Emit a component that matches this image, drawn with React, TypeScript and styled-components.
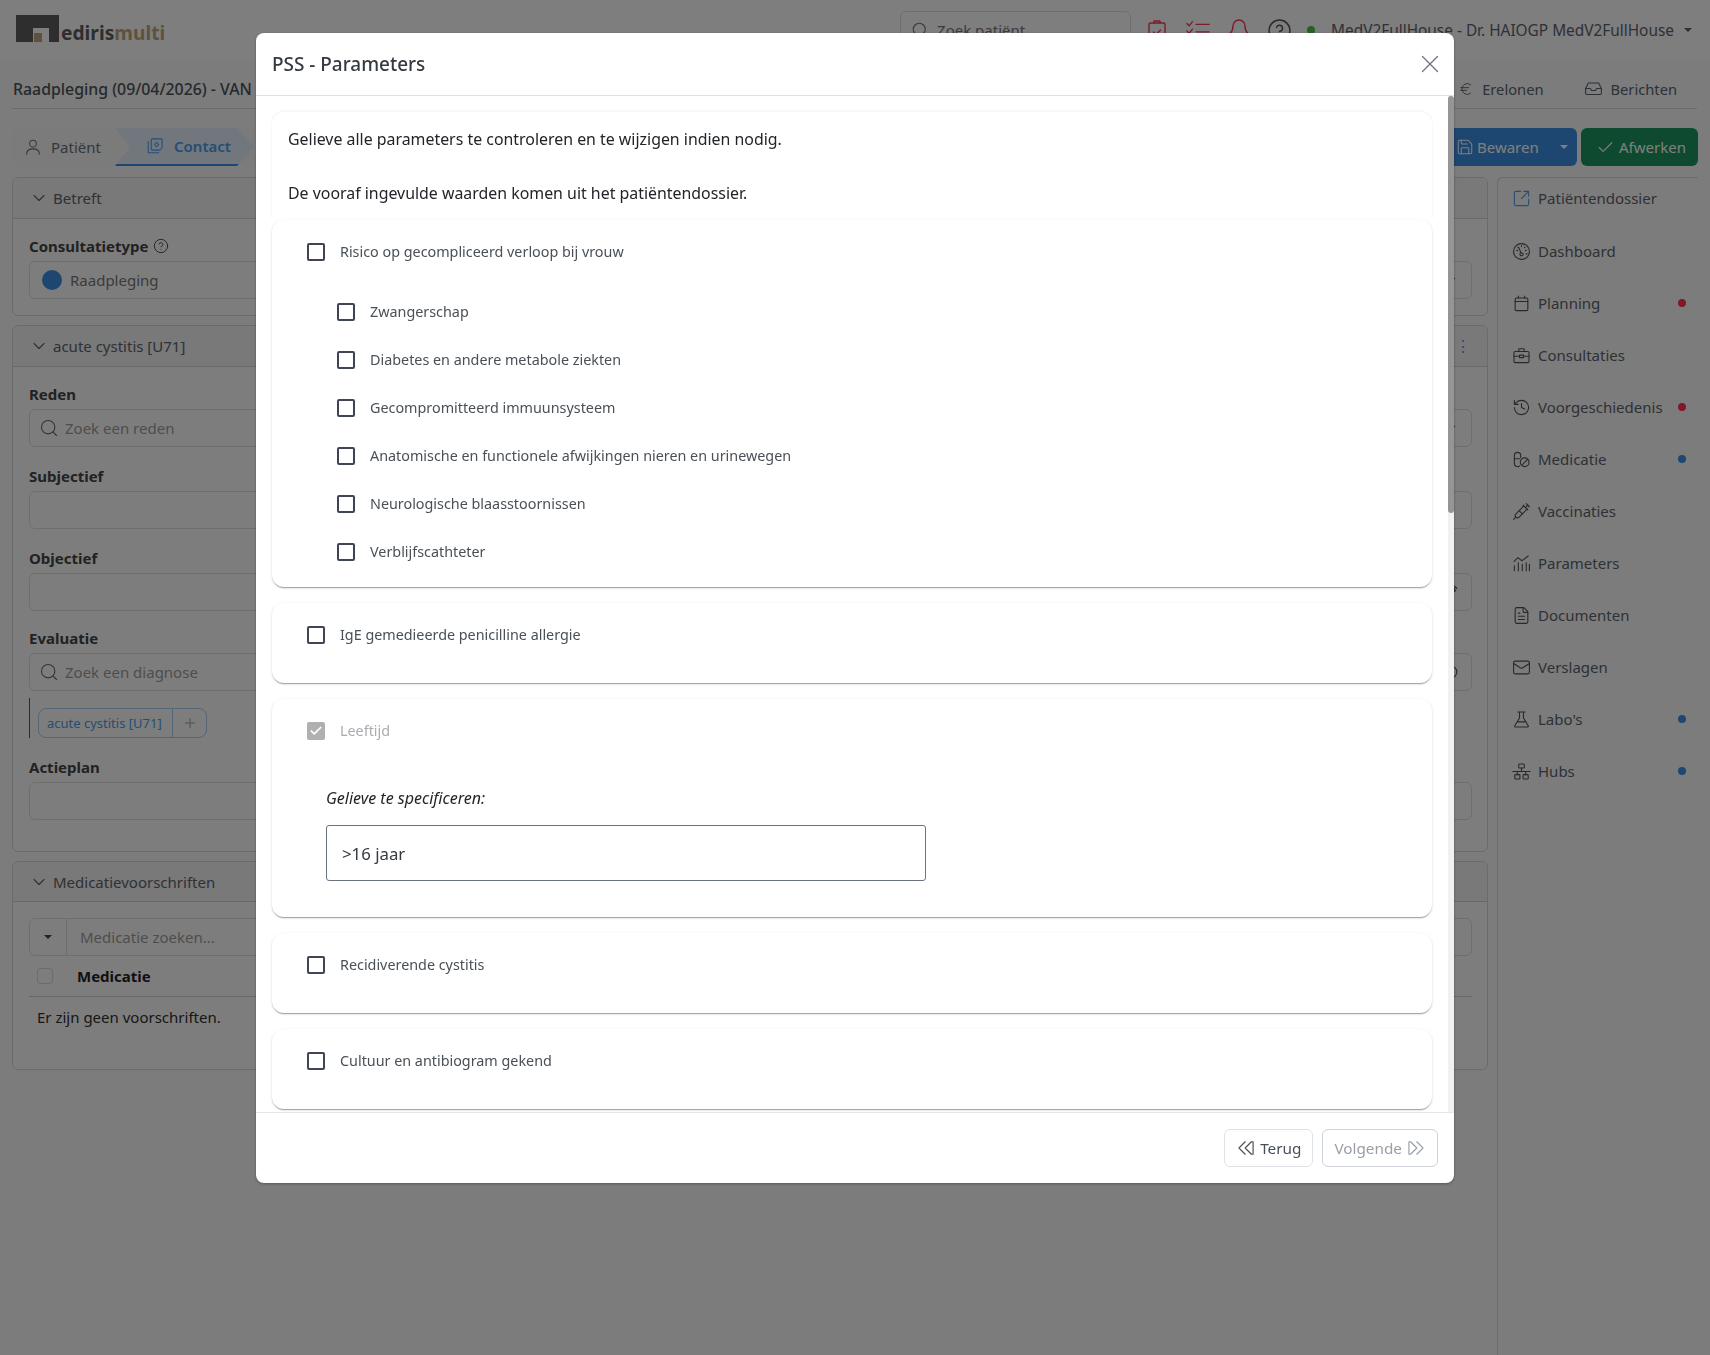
import React from "react";
import styled, { createGlobalStyle } from "styled-components";
import {
  Bell,
  Check,
  ChevronDown,
  CircleHelp,
  Euro,
  FileText,
  History,
  Mail,
  Plus,
  Save,
  Search,
  SquareArrowOutUpRight,
  Syringe,
  X,
} from "lucide-react";

const GlobalStyle = createGlobalStyle`
  html, body {
    margin: 0;
    padding: 0;
    background: #f9f9f9;
    font-family: "Noto Sans", "Open Sans", sans-serif;
    color: #5c636a;
  }
  * { box-sizing: border-box; }
`;

/* ---------- drawn icons ---------- */

const Drawn = styled.svg<{ $size?: number }>`
  width: ${(p) => p.$size ?? 19}px;
  height: ${(p) => p.$size ?? 19}px;
  flex: none;
  fill: none;
  stroke: currentColor;
  stroke-width: 1.4;
  stroke-linecap: round;
  stroke-linejoin: round;
`;

const IconGauge = () => (
  <Drawn viewBox="0 0 24 24">
    <circle cx="12" cy="12" r="10" />
    <circle cx="12" cy="15.5" r="2" />
    <path d="M11.3 13.6 8.5 7M6 10.5l1 .4M7.5 6.5l.7.7M12 4.5v1.2M16.5 6.5l-.7.7M18 10.5l-1 .4M19 15h-1.2" />
  </Drawn>
);
const IconCalendar = () => (
  <Drawn viewBox="0 0 24 24">
    <rect x="4" y="5" width="16" height="16" rx="1.5" />
    <path d="M4 9.5h16M8 2.5V5M16 2.5V5" />
  </Drawn>
);
const IconBriefcase = () => (
  <Drawn viewBox="0 0 24 24">
    <rect x="2.5" y="7" width="19" height="14" rx="1.5" />
    <path d="M8.5 7V4.5a1 1 0 0 1 1-1h5a1 1 0 0 1 1 1V7M2.5 13h7M14.5 13h7" />
    <rect x="9.5" y="11.5" width="5" height="3.2" />
  </Drawn>
);
const IconMedication = () => (
  <Drawn viewBox="0 0 24 24">
    <path d="M3 10V7a4 4 0 0 1 8 0v2.5M3 10v7a4 4 0 0 0 6.5 3.2M3 11h7" />
    <circle cx="16" cy="15.5" r="5.5" />
    <path d="m12.5 19 7-7" />
  </Drawn>
);
const IconBars = () => (
  <Drawn viewBox="0 0 24 24">
    <path d="M3 21v-6M8 21V11M13 21v-8M18 21V11M22 21v-8" />
    <path d="m2.5 9.5 5-5 5 4 8-6" />
  </Drawn>
);
const IconFlask = () => (
  <Drawn viewBox="0 0 24 24">
    <path d="M7.5 2.5h9M9.5 2.5V10L3.5 20a1 1 0 0 0 .9 1.5h15.2a1 1 0 0 0 .9-1.5l-6-10V2.5M6.5 15h11" />
  </Drawn>
);
const IconHubs = () => (
  <Drawn viewBox="0 0 24 24">
    <rect x="8.5" y="2.5" width="7" height="5" rx="1" />
    <rect x="3.5" y="16" width="6.5" height="5.5" rx="1" />
    <rect x="14" y="16" width="6.5" height="5.5" rx="1" />
    <path d="M12 7.5V12M1 12h22M6.7 12v4M17.3 12v4" />
  </Drawn>
);
const IconPerson = () => (
  <Drawn viewBox="0 0 24 24" $size={18}>
    <circle cx="12" cy="7.5" r="4.5" />
    <path d="M3.5 21.5c0-4.5 3.5-7 8.5-7s8.5 2.5 8.5 7" />
  </Drawn>
);
const IconContact = () => (
  <Drawn viewBox="0 0 24 24" $size={18}>
    <path d="M3 6v15h14" />
    <path d="M8.5 2.5H20a1.5 1.5 0 0 1 1.5 1.5v8.5a5 5 0 0 1-5 5H8.5A1.5 1.5 0 0 1 7 16V4a1.5 1.5 0 0 1 1.5-1.5z" />
    <path d="m14.2 7 2.8 3-2.8 3-2.8-3z" />
  </Drawn>
);
const IconInbox = () => (
  <Drawn viewBox="0 0 24 24" $size={19}>
    <path d="M5.5 5h13L22 12v6a1.5 1.5 0 0 1-1.5 1.5h-17A1.5 1.5 0 0 1 2 18v-6zM2 12h6l1.5 2.5h5L16 12h6" />
  </Drawn>
);
const IconClipboard = () => (
  <Drawn viewBox="0 0 24 24" $size={24}>
    <rect x="4" y="5" width="16" height="17" rx="1.5" />
    <path d="M9 5V3h6v2M8.5 14l2.5 2.5 4.5-4.5" />
  </Drawn>
);
const IconTodo = () => (
  <Drawn viewBox="0 0 28 24" $size={26}>
    <path d="m2 5 2.5 2.5L8 3M2 13l2.5 2.5L8 11M2 21l2.5 2.5L8 19M12 6h14M12 14h14M12 22h14" />
  </Drawn>
);
const IconBack = () => (
  <Drawn viewBox="0 0 24 24" $size={20}>
    <path d="M11 4.5 3.5 12l7.5 7.5M18.5 4.5 11 12l7.5 7.5M20.5 4.5v15M18.5 4.5h2M18.5 19.5h2" />
  </Drawn>
);
const IconNext = () => (
  <Drawn viewBox="0 0 24 24" $size={20}>
    <path d="M13 4.5 20.5 12 13 19.5M5.5 4.5 13 12l-7.5 7.5M3.5 4.5v15M3.5 4.5h2M3.5 19.5h2" />
  </Drawn>
);
const LogoMark = () => (
  <svg width="43" height="27" viewBox="0 0 43 27" style={{ flex: "none" }}>
    <path d="M0 0h43v27H33V13H17v14H0z" fill="#5c5c5c" />
    <rect x="18" y="18" width="8" height="9" fill="#bda57a" />
  </svg>
);

/* ---------- data ---------- */

const sideItems = [
  { label: "Patiëntendossier", icon: <SquareArrowOutUpRight size={19} strokeWidth={1.4} />, accent: true },
  { label: "Dashboard", icon: <IconGauge /> },
  { label: "Planning", icon: <IconCalendar />, dot: "#ff3050" },
  { label: "Consultaties", icon: <IconBriefcase /> },
  { label: "Voorgeschiedenis", icon: <History size={19} strokeWidth={1.4} />, dot: "#ff3050" },
  { label: "Medicatie", icon: <IconMedication />, dot: "#3a8ee0" },
  { label: "Vaccinaties", icon: <Syringe size={19} strokeWidth={1.4} /> },
  { label: "Parameters", icon: <IconBars /> },
  { label: "Documenten", icon: <FileText size={19} strokeWidth={1.4} /> },
  { label: "Verslagen", icon: <Mail size={19} strokeWidth={1.4} /> },
  { label: "Labo's", icon: <IconFlask />, dot: "#3a8ee0" },
  { label: "Hubs", icon: <IconHubs />, dot: "#3a8ee0" },
];

const riskItems = [
  "Zwangerschap",
  "Diabetes en andere metabole ziekten",
  "Gecompromitteerd immuunsysteem",
  "Anatomische en functionele afwijkingen nieren en urinewegen",
  "Neurologische blaasstoornissen",
  "Verblijfscathteter",
];

/* ---------- app ---------- */

const CheckRow: React.FC<{ label: string; checked?: boolean }> = ({ label, checked }) => (
  <Row>
    <CheckBox $checked={checked}>{checked && <Check size={14} strokeWidth={3} color="#fff" />}</CheckBox>
    <RowLabel $muted={checked}>{label}</RowLabel>
  </Row>
);

const App: React.FC = () => (
  <>
    <GlobalStyle />
    <Page>
      <TopBar>
        <Logo>
          <LogoMark />
          <LogoText>
            ediris<LogoAccent>multi</LogoAccent>
          </LogoText>
        </Logo>
        <TopSearch>
          <Search size={18} strokeWidth={1.5} />
          <span>Zoek patiënt</span>
        </TopSearch>
        <TopIcons>
          <RedIcon>
            <IconClipboard />
          </RedIcon>
          <RedIcon>
            <IconTodo />
          </RedIcon>
          <RedIcon>
            <Bell size={24} strokeWidth={1.4} />
          </RedIcon>
          <CircleHelp size={25} strokeWidth={1.4} color="#555" />
        </TopIcons>
        <OnlineDot />
        <UserName>MedV2FullHouse - Dr. HAIOGP MedV2FullHouse</UserName>
        <Caret />
      </TopBar>

      <TitleRow>
        <PageTitle>Raadpleging (09/04/2026) - VAN</PageTitle>
        <TitleLinks>
          <TitleLink>
            <Euro size={16} strokeWidth={1.4} />
            Erelonen
          </TitleLink>
          <TitleLink>
            <IconInbox />
            Berichten
          </TitleLink>
        </TitleLinks>
      </TitleRow>

      <ActionRow>
        <Steps>
          <StepFirst>
            <IconPerson />
            Patiënt
          </StepFirst>
          <StepActive>
            <IconContact />
            Contact
          </StepActive>
        </Steps>
        <Actions>
          <SaveButton>
            <Save size={18} strokeWidth={1.4} />
            Bewaren
            <CaretLight />
          </SaveButton>
          <FinishButton>
            <Check size={19} strokeWidth={1.4} />
            Afwerken
          </FinishButton>
        </Actions>
      </ActionRow>

      <Content>
        <Panels>
          <Panel>
            <PanelHeader>
              <ChevronDown size={20} strokeWidth={1.3} />
              Betreft
            </PanelHeader>
            <PanelBody>
              <Field>
                <FieldLabel>
                  Consultatietype <CircleHelp size={16} strokeWidth={1.4} />
                </FieldLabel>
                <FieldInput>
                  <TypeDot />
                  <TypeText>Raadpleging</TypeText>
                  <InputTail>
                    <ChevronDown size={14} />
                  </InputTail>
                </FieldInput>
              </Field>
            </PanelBody>
          </Panel>

          <Panel>
            <PanelHeader>
              <ChevronDown size={20} strokeWidth={1.3} />
              acute cystitis [U71]
              <Kebab>⋮</Kebab>
            </PanelHeader>
            <PanelBody $bottom={31}>
              <Field>
                <FieldLabel>Reden</FieldLabel>
                <FieldInput>
                  <Search size={20} strokeWidth={1.3} />
                  <Placeholder>Zoek een reden</Placeholder>
                  <InputTail>
                    <ChevronDown size={14} />
                  </InputTail>
                </FieldInput>
              </Field>
              <Field>
                <FieldLabel>Subjectief</FieldLabel>
                <FieldInput />
              </Field>
              <Field>
                <FieldLabel>Objectief</FieldLabel>
                <FieldInput>
                  <InputTail>
                    <Syringe size={14} />
                  </InputTail>
                </FieldInput>
              </Field>
              <EvaluationField>
                <FieldLabel>Evaluatie</FieldLabel>
                <FieldInput>
                  <Search size={20} strokeWidth={1.3} />
                  <Placeholder>Zoek een diagnose</Placeholder>
                  <InputTail>
                    <CircleHelp size={14} />
                  </InputTail>
                </FieldInput>
                <ChipRow>
                  <Chip>
                    <ChipText>acute cystitis [U71]</ChipText>
                    <ChipAdd>
                      <Plus size={16} strokeWidth={1.4} />
                    </ChipAdd>
                  </Chip>
                </ChipRow>
              </EvaluationField>
              <Field>
                <FieldLabel>Actieplan</FieldLabel>
                <FieldInput />
              </Field>
            </PanelBody>
          </Panel>

          <Panel>
            <MedHeader>
              <ChevronDown size={20} strokeWidth={1.3} />
              Medicatievoorschriften
            </MedHeader>
            <MedBody>
              <MedSearch>
                <MedToggle>
                  <CaretSmall />
                </MedToggle>
                <Placeholder>Medicatie zoeken...</Placeholder>
              </MedSearch>
              <MedHead>
                <MedCheck />
                Medicatie
              </MedHead>
              <MedEmpty>Er zijn geen voorschriften.</MedEmpty>
            </MedBody>
          </Panel>
        </Panels>

        <Sidebar>
          {sideItems.map((item) => (
            <SideItem key={item.label}>
              <SideIcon $accent={item.accent}>{item.icon}</SideIcon>
              {item.label}
              {item.dot && <SideDot $color={item.dot} />}
            </SideItem>
          ))}
        </Sidebar>
      </Content>
    </Page>

    <Backdrop>
      <Modal>
        <ModalHeader>
          <ModalTitle>PSS - Parameters</ModalTitle>
          <CloseButton>
            <X size={30} strokeWidth={1} />
          </CloseButton>
        </ModalHeader>
        <ModalScroll>
          <ModalBody>
            <IntroCard>
              <p>Gelieve alle parameters te controleren en te wijzigen indien nodig.</p>
              <p>De vooraf ingevulde waarden komen uit het patiëntendossier.</p>
            </IntroCard>
            <CardList>
              <Card>
                <CheckRow label="Risico op gecompliceerd verloop bij vrouw" />
                <SubList>
                  {riskItems.map((item) => (
                    <CheckRow key={item} label={item} />
                  ))}
                </SubList>
              </Card>
              <Card $short>
                <CheckRow label="IgE gemedieerde penicilline allergie" />
              </Card>
              <Card>
                <CheckRow label="Leeftijd" checked />
                <Specify>
                  <SpecifyLabel>Gelieve te specificeren:</SpecifyLabel>
                  <SpecifyInput readOnly value=">16 jaar" />
                </Specify>
              </Card>
              <Card $short>
                <CheckRow label="Recidiverende cystitis" />
              </Card>
              <Card $short>
                <CheckRow label="Cultuur en antibiogram gekend" />
              </Card>
            </CardList>
          </ModalBody>
          <ScrollTrack>
            <ScrollThumb />
          </ScrollTrack>
        </ModalScroll>
        <ModalFooter>
          <FooterButton>
            <IconBack />
            Terug
          </FooterButton>
          <FooterButton disabled>
            Volgende
            <IconNext />
          </FooterButton>
        </ModalFooter>
      </Modal>
    </Backdrop>
  </>
);

/* ---------- page behind the dialog ---------- */

const Page = styled.div`
  min-height: 1355px;
  display: flex;
  flex-direction: column;
`;

const TopBar = styled.header`
  height: 60px;
  flex: none;
  display: flex;
  align-items: center;
  background: #fcfcfc;
  padding: 0 4px 0 16px;
`;

const Logo = styled.div`
  display: flex;
  align-items: flex-end;
  gap: 2px;
  margin-top: -3px;
  height: 27px;
`;

const LogoText = styled.span`
  margin-bottom: -1px;
  font-size: 19.2px;
  line-height: 20px;
  font-weight: 700;
  color: #5c5c5c;
`;

const LogoAccent = styled.span`
  color: #bda57a;
`;

const TopSearch = styled.div`
  margin-left: auto;
  width: 231px;
  height: 38px;
  display: flex;
  align-items: center;
  gap: 8px;
  padding: 0 10px;
  border: 1px solid #dcdcdc;
  border-radius: 6px;
  font-size: 15px;
  color: #777;
`;

const TopIcons = styled.div`
  display: flex;
  align-items: center;
  gap: 16px;
  margin-left: 14px;
`;

const RedIcon = styled.span`
  display: flex;
  color: #f43a55;
`;

const OnlineDot = styled.span`
  width: 8px;
  height: 8px;
  border-radius: 50%;
  background: #4cc04c;
  margin-left: 15px;
`;

const UserName = styled.span`
  margin-left: 16px;
  font-size: 15.4px;
  color: #5c636a;
  white-space: nowrap;
`;

const Caret = styled.span`
  margin-left: 10px;
  margin-right: 14px;
  border-left: 4px solid transparent;
  border-right: 4px solid transparent;
  border-top: 4px solid #5c636a;
`;

const TitleRow = styled.div`
  height: 49px;
  flex: none;
  margin: 0 13px 0 12px;
  padding: 9px 20px 0 1px;
  display: flex;
  align-items: center;
  justify-content: space-between;
  border-bottom: 1px solid #d6d6d6;
`;

const PageTitle = styled.h1`
  margin: 0;
  font-size: 15.85px;
  font-weight: 500;
  color: #4c5258;
`;

const TitleLinks = styled.div`
  display: flex;
  gap: 40px;
`;

const TitleLink = styled.span`
  display: flex;
  align-items: center;
  gap: 8px;
  font-size: 14.7px;
  color: #5c636a;
`;

const ActionRow = styled.div`
  margin: 19px 12px 11px;
  height: 38px;
  flex: none;
  display: flex;
  justify-content: space-between;
`;

const Steps = styled.div`
  display: flex;
  background: #f6f6f6;
  border-radius: 6px;
`;

const StepFirst = styled.div`
  width: 118px;
  display: flex;
  align-items: center;
  gap: 9px;
  padding-left: 12px;
  font-size: 15px;
  color: #6a7178;
  background: #f6f6f6;
  border-radius: 6px 0 0 6px;
  clip-path: polygon(0 0, 103px 0, 100% 50%, 103px 100%, 0 100%);
`;

const StepActive = styled.div`
  width: 140px;
  margin-left: -15px;
  display: flex;
  align-items: center;
  gap: 10px;
  padding-left: 31px;
  font-size: 15px;
  font-weight: 600;
  color: #4a9ce8;
  background: #e2eef8;
  border-bottom: 2px solid #3a8ee0;
  clip-path: polygon(0 0, 122px 0, 100% 50%, 122px 100%, 0 100%, 15px 50%);
`;

const Actions = styled.div`
  display: flex;
  gap: 4px;
`;

const ActionButton = styled.button`
  height: 38px;
  border: none;
  border-radius: 6px;
  display: flex;
  align-items: center;
  color: #fff;
  font-family: inherit;
  font-size: 15px;
`;

const SaveButton = styled(ActionButton)`
  width: 137px;
  gap: 3px;
  padding-left: 16px;
  background: #3a8ee0;
`;

const FinishButton = styled(ActionButton)`
  width: 117px;
  gap: 4px;
  padding-left: 15px;
  background: #1a945e;
`;

const CaretLight = styled.span`
  margin-left: 18px;
  border-left: 4px solid transparent;
  border-right: 4px solid transparent;
  border-top: 4px solid #fff;
`;

const Content = styled.div`
  flex: 1;
  display: flex;
  gap: 9px;
  padding: 0 12px;
`;

const Panels = styled.div`
  width: 1476px;
  flex: none;
  display: flex;
  flex-direction: column;
  gap: 9px;
`;

const Panel = styled.section`
  background: #fbfbfb;
  border: 1px solid #d6d6d6;
  border-radius: 6px;
  overflow: hidden;
`;

const PanelHeader = styled.div`
  height: 41px;
  display: flex;
  align-items: center;
  gap: 4px;
  padding-left: 16px;
  background: #f2f2f2;
  border-bottom: 1px solid #d2d2d2;
  font-size: 15px;
  color: #5c636a;
`;

const MedHeader = styled(PanelHeader)`
  height: 40px;
`;

const Kebab = styled.span`
  margin-left: auto;
  margin-right: 16px;
  font-size: 16px;
  color: #4a9ce8;
`;

const PanelBody = styled.div<{ $bottom?: number }>`
  display: flex;
  flex-direction: column;
  gap: 18px;
  padding: 16px 15px ${(p) => p.$bottom ?? 16}px 16px;
`;

const Field = styled.div`
  display: flex;
  flex-direction: column;
`;

const EvaluationField = styled(Field)`
  margin-top: -2px;
`;

const FieldLabel = styled.label`
  display: flex;
  align-items: center;
  gap: 5px;
  height: 22px;
  margin-bottom: 4px;
  font-size: 15px;
  font-weight: 700;
  color: #444;
`;

const FieldInput = styled.div`
  height: 38px;
  display: flex;
  align-items: center;
  gap: 6px;
  padding: 0 13px 0 9px;
  background: #fbfbfb;
  border: 1px solid #dcdcdc;
  border-radius: 6px;
  color: #666;
`;

const InputTail = styled.span`
  margin-left: auto;
  display: flex;
  color: #555;
`;

const TypeDot = styled.span`
  width: 20px;
  height: 20px;
  margin-left: 3px;
  border-radius: 50%;
  background: #3a8ee0;
`;

const TypeText = styled.span`
  margin-left: 2px;
  font-size: 15px;
  color: #777;
`;

const Placeholder = styled.span`
  font-size: 15px;
  color: #9c9c9c;
`;

const ChipRow = styled.div`
  margin-top: 7px;
  padding: 10px 0 0 8px;
  border-left: 1px solid #555;
`;

const Chip = styled.div`
  width: 169px;
  height: 30px;
  display: flex;
  border: 1px solid #a8cdef;
  border-radius: 8px;
`;

const ChipText = styled.span`
  flex: 1;
  display: flex;
  align-items: center;
  padding-left: 8px;
  font-size: 13px;
  color: #4a9ce8;
  border-right: 1px solid #a8cdef;
  white-space: nowrap;
`;

const ChipAdd = styled.span`
  width: 33px;
  flex: none;
  display: flex;
  align-items: center;
  justify-content: center;
  color: #8a9aa8;
`;

const MedBody = styled.div`
  padding: 16px 15px 41px 16px;
`;

const MedSearch = styled.div`
  height: 38px;
  display: flex;
  align-items: center;
  gap: 13px;
  border: 1px solid #dcdcdc;
  border-radius: 6px;
`;

const MedToggle = styled.span`
  width: 37px;
  height: 100%;
  display: flex;
  align-items: center;
  justify-content: center;
  border-right: 1px solid #dcdcdc;
`;

const CaretSmall = styled.span`
  border-left: 4px solid transparent;
  border-right: 4px solid transparent;
  border-top: 4px solid #444;
`;

const MedHead = styled.div`
  height: 41px;
  display: flex;
  align-items: center;
  gap: 24px;
  padding-left: 8px;
  border-bottom: 1px solid #cfcfcf;
  font-size: 15px;
  font-weight: 700;
  color: #222;
`;

const MedCheck = styled.span`
  width: 16px;
  height: 16px;
  border: 1px solid #d4d4d4;
  border-radius: 4px;
`;

const MedEmpty = styled.div`
  padding: 9px 0 0 8px;
  font-size: 15px;
  line-height: 22px;
  color: #2e2e2e;
`;

const Sidebar = styled.aside`
  flex: 1;
  display: flex;
  flex-direction: column;
  gap: 10px;
  border-left: 1px solid #d6d6d6;
  border-top: 1px solid #d6d6d6;
  border-top-left-radius: 6px;
`;

const SideItem = styled.div`
  height: 42px;
  flex: none;
  display: flex;
  align-items: center;
  padding-left: 14px;
  font-size: 15px;
  color: #5c636a;

  &:first-child {
    height: 40px;
    margin-bottom: 2px;
  }
`;

const SideIcon = styled.span<{ $accent?: boolean }>`
  width: 26px;
  display: flex;
  color: ${(p) => (p.$accent ? "#4a9ce8" : "#4e5358")};
`;

const SideDot = styled.span<{ $color: string }>`
  width: 8px;
  height: 8px;
  margin-left: auto;
  margin-right: 12px;
  border-radius: 50%;
  background: ${(p) => p.$color};
`;

/* ---------- dialog ---------- */

const Backdrop = styled.div`
  position: fixed;
  inset: 0;
  display: flex;
  justify-content: center;
  align-items: flex-start;
  padding-top: 33px;
  background: rgba(0, 0, 0, 0.5);
`;

const Modal = styled.div`
  width: 1198px;
  height: 1150px;
  display: flex;
  flex-direction: column;
  background: #fff;
  border-radius: 8px;
  overflow: hidden;
  box-shadow: 0 1px 3px rgba(0, 0, 0, 0.3);
`;

const ModalHeader = styled.div`
  height: 63px;
  flex: none;
  display: flex;
  align-items: center;
  justify-content: space-between;
  padding: 0 9px 0 16px;
  border-bottom: 1px solid #dee2e6;
`;

const ModalTitle = styled.h2`
  margin: 0;
  font-size: 18.95px;
  font-weight: 500;
  color: #343a40;
`;

const CloseButton = styled.span`
  display: flex;
  color: #6c757d;
`;

const ModalScroll = styled.div`
  position: relative;
  flex: 1;
  min-height: 0;
  overflow: hidden;
`;

const ModalBody = styled.div`
  padding: 16px 22px 0 16px;
`;

const ScrollTrack = styled.div`
  position: absolute;
  top: 0;
  right: 0;
  bottom: 0;
  width: 6px;
  background: #f1f1f1;
`;

const ScrollThumb = styled.div`
  height: 417px;
  background: #959595;
  border-radius: 3px;
`;

const IntroCard = styled.div`
  height: 108px;
  padding: 15px 16px;
  border-radius: 12px 12px 0 0;
  box-shadow: 0 -1px 3px rgba(0, 0, 0, 0.06);
  font-size: 15.9px;
  line-height: 24px;
  color: #212529;

  p {
    margin: 0 0 30px;
  }
`;

const CardList = styled.div`
  display: flex;
  flex-direction: column;
  gap: 16px;
`;

const Card = styled.div<{ $short?: boolean }>`
  flex: none;
  padding: 20px 35px ${(p) => (p.$short ? 36 : 23)}px;
  background: #fff;
  border-radius: 12px;
  box-shadow: 0 2px 1px -1px rgba(0, 0, 0, 0.2), 0 1px 1px 0 rgba(0, 0, 0, 0.14), 0 1px 3px 0 rgba(0, 0, 0, 0.12);
`;

const Row = styled.label`
  height: 24px;
  display: flex;
  align-items: center;
  gap: 15px;
`;

const CheckBox = styled.span<{ $checked?: boolean }>`
  width: 18px;
  height: 18px;
  flex: none;
  display: flex;
  align-items: center;
  justify-content: center;
  border: ${(p) => (p.$checked ? "none" : "2px solid #3f4554")};
  border-radius: 2px;
  background: ${(p) => (p.$checked ? "#b0b0b0" : "#fff")};
`;

const RowLabel = styled.span<{ $muted?: boolean }>`
  padding-bottom: 2px;
  font-size: 14.35px;
  color: ${(p) => (p.$muted ? "#a8adb2" : "#495057")};
`;

const SubList = styled.div`
  margin-top: 36px;
  padding-left: 30px;
  display: flex;
  flex-direction: column;
  gap: 24px;
`;

const Specify = styled.div`
  margin: 44px 0 13px 19px;
`;

const SpecifyLabel = styled.div`
  height: 22px;
  margin-bottom: 16px;
  font-size: 16px;
  line-height: 22px;
  font-style: italic;
  color: #212529;
`;

const SpecifyInput = styled.input`
  display: block;
  width: 600px;
  height: 56px;
  padding: 0 15px;
  border: 1px solid #6b7280;
  border-radius: 3px;
  font-family: inherit;
  font-size: 16.8px;
  color: #343a40;
  outline: none;
`;

const ModalFooter = styled.div`
  height: 71px;
  flex: none;
  display: flex;
  align-items: center;
  justify-content: flex-end;
  gap: 9px;
  padding-right: 16px;
  border-top: 1px solid #e4e6e9;
`;

const FooterButton = styled.button`
  height: 38px;
  display: flex;
  align-items: center;
  gap: 4px;
  padding: 0 11px;
  background: #fff;
  border: 1px solid #dfe3e7;
  border-radius: 6px;
  font-family: inherit;
  font-size: 15.3px;
  color: #495057;

  &:disabled {
    color: #9a9fa4;
    border-color: #ced4da;
  }
`;

export default App;
